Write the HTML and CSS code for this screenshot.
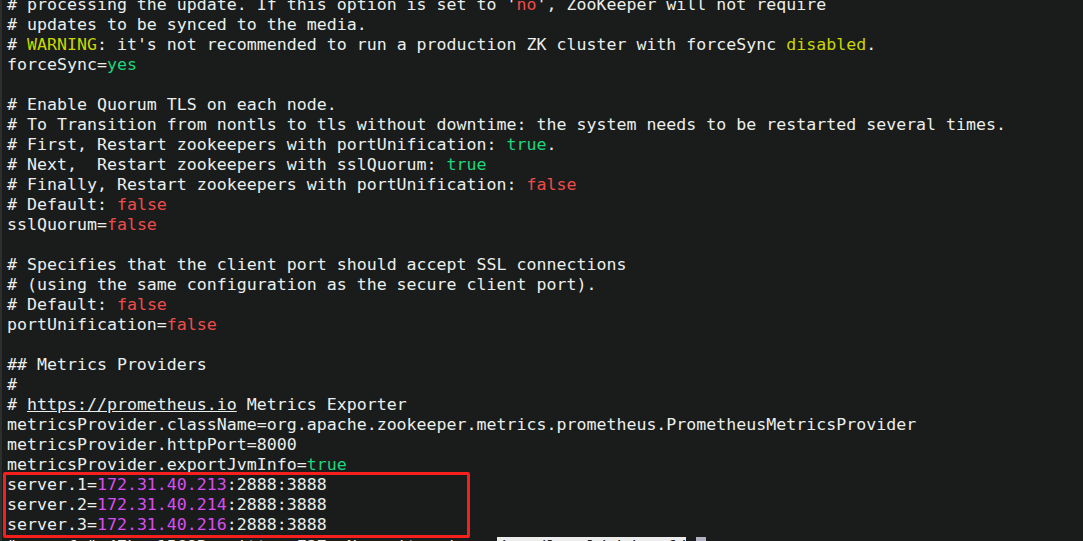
FILE: index.html
```html
<!DOCTYPE html>
<html lang="en">
<head>
    <meta charset="UTF-8">
    <title>zoo.cfg - vim</title>
    <link rel="stylesheet" href="styles.css">
</head>
<body>

<div class="term">
    <div class="buffer">
        <div class="ln"># processing the update. If this option is set to '<span class="red">no</span>', ZooKeeper will not require</div>
        <div class="ln"># updates to be synced to the media.</div>
        <div class="ln"># <span class="yellow">WARNING</span>: it's not recommended to run a production ZK cluster with forceSync <span class="yellow">disabled</span>.</div>
        <div class="ln">forceSync=<span class="green">yes</span></div>
        <div class="ln"> </div>
        <div class="ln"># Enable Quorum TLS on each node.</div>
        <div class="ln"># To Transition from nontls to tls without downtime: the system needs to be restarted several times.</div>
        <div class="ln"># First, Restart zookeepers with portUnification: <span class="green">true</span>.</div>
        <div class="ln"># Next,  Restart zookeepers with sslQuorum: <span class="green">true</span></div>
        <div class="ln"># Finally, Restart zookeepers with portUnification: <span class="red">false</span></div>
        <div class="ln"># Default: <span class="red">false</span></div>
        <div class="ln">sslQuorum=<span class="red">false</span></div>
        <div class="ln"> </div>
        <div class="ln"># Specifies that the client port should accept SSL connections</div>
        <div class="ln"># (using the same configuration as the secure client port).</div>
        <div class="ln"># Default: <span class="red">false</span></div>
        <div class="ln">portUnification=<span class="red">false</span></div>
        <div class="ln"> </div>
        <div class="ln">## Metrics Providers</div>
        <div class="ln">#</div>
        <div class="ln"># <span class="link">https://prometheus.io</span> Metrics Exporter</div>
        <div class="ln">metricsProvider.className=org.apache.zookeeper.metrics.prometheus.PrometheusMetricsProvider</div>
        <div class="ln">metricsProvider.httpPort=8000</div>
        <div class="ln">metricsProvider.exportJvmInfo=<span class="green">true</span></div>
        <div class="servers">
            <div class="ln">server.1=<span class="ip">172.31.40.213</span>:2888:3888</div>
            <div class="ln">server.2=<span class="ip">172.31.40.214</span>:2888:3888</div>
            <div class="ln">server.3=<span class="ip">172.31.40.216</span>:2888:3888</div>
        </div>
        <div class="ln status">"zoo.cfg" 47L, 1568B written E37: No write since <span class="sel">/usr/local/zk/conf/</span> <span class="cursor"> </span></div>
    </div>
</div>

</body>
</html>
```

FILE: styles.css
```css
html, body {
    margin: 0;
    padding: 0;
    background-color: #191c1a;
    height: 541px;
    overflow: hidden;
}

.term {
    border-left: 2px solid #2c2f2d;
    height: 541px;
    overflow: hidden;
}

.buffer {
    margin-top: -5px;
    padding-left: 5px;
    font-family: "DejaVu Sans Mono", monospace;
    font-size: 16.6px;
    line-height: 20px;
    color: #eceeed;
}

.ln {
    height: 20px;
    white-space: pre;
}

.status {
    padding-top: 2px;
}

.red { color: #f04b4b; }
.green { color: #1fd67a; }
.yellow { color: #c9d602; }
.ip { color: #d94cf0; }
.link { text-decoration: underline; }

/* annotation box drawn over the three server lines */
.servers {
    position: relative;
}

.servers::after {
    content: "";
    position: absolute;
    top: -3px;
    left: -4px;
    width: 461px;
    height: 60px;
    border: 3px solid #f5201d;
    border-radius: 2px;
}

.sel {
    background-color: #ececec;
    color: #222;
}

.cursor {
    background-color: #b2b2c2;
}
```
